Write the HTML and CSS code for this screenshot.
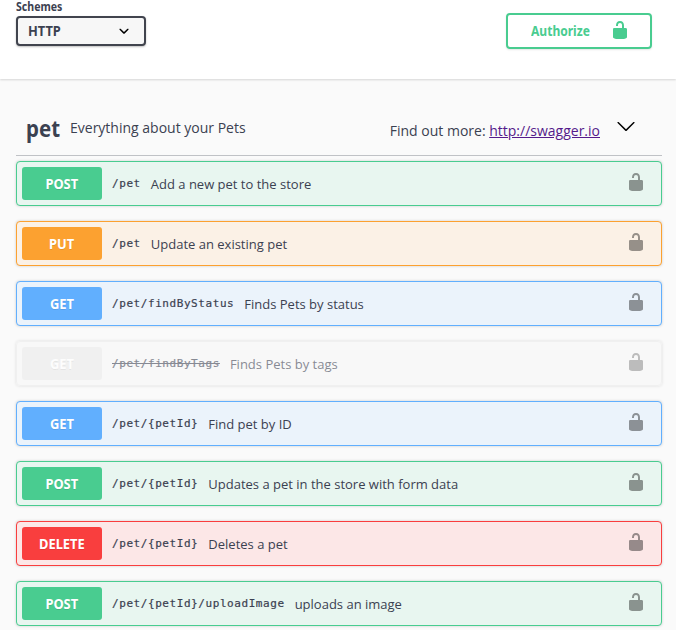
FILE: index.html
```html
<!DOCTYPE html>
<html lang="en">
<head>
<meta charset="utf-8">
<title>Swagger UI</title>
<link rel="stylesheet" href="styles.css">
</head>
<body>
<svg class="defs" width="0" height="0">
  <symbol id="unlocked" viewBox="0 0 20 20"><path d="M15.8 8H14V5.6C14 2.703 12.665 1 10 1 7.334 1 6 2.703 6 5.6V6h2v-.801C8 3.754 8.797 3 10 3c1.203 0 2 .754 2 2.199V8H4c-.553 0-1 .646-1 1.199V17c0 .549.428 1.139.951 1.307l1.197.387C5.672 18.861 6.55 19 7.1 19h5.8c.549 0 1.428-.139 1.951-.307l1.196-.387c.524-.167.953-.757.953-1.306V9.199C17 8.646 16.352 8 15.8 8z"/></symbol>
  <symbol id="arrow" viewBox="0 0 20 20"><path d="M13.418 7.859c.271-.268.709-.268.978 0 .27.268.272.701 0 .969l-3.908 3.83c-.27.268-.707.268-.979 0l-3.908-3.83c-.27-.267-.27-.701 0-.969.271-.268.709-.268.978 0L10 11l3.418-3.141z"/></symbol>
  <symbol id="large-arrow" viewBox="0 0 20 20"><path d="M17.418 6.109c.272-.268.709-.268.979 0s.271.701 0 .969l-7.908 7.83c-.27.268-.707.268-.979 0l-7.908-7.83c-.27-.268-.27-.701 0-.969.271-.268.709-.268.979 0L10 13.25l7.418-7.141z"/></symbol>
</svg>
<header class="scheme">
  <div class="schemes">
    <div class="schemes-title"><span class="fit">Schemes</span></div>
    <div class="select"><span class="fit">HTTP</span><svg class="icon"><use href="#arrow"/></svg></div>
  </div>
  <button class="authorize"><span class="fit">Authorize</span><svg class="icon"><use href="#unlocked"/></svg></button>
</header>
<main>
  <div class="tag">
    <h3><span class="fit">pet</span></h3>
    <p class="about">Everything about your Pets</p>
    <p class="docs">Find out more: <a href="#">http://swagger.io</a></p>
    <svg class="icon expand"><use href="#large-arrow"/></svg>
  </div>
  <div class="op post"><span class="method"><span class="fit">POST</span></span><code>/pet</code><span class="desc">Add a new pet to the store</span><svg class="icon"><use href="#unlocked"/></svg></div>
  <div class="op put"><span class="method"><span class="fit">PUT</span></span><code>/pet</code><span class="desc">Update an existing pet</span><svg class="icon"><use href="#unlocked"/></svg></div>
  <div class="op get"><span class="method"><span class="fit">GET</span></span><code>/pet/findByStatus</code><span class="desc">Finds Pets by status</span><svg class="icon"><use href="#unlocked"/></svg></div>
  <div class="op deprecated"><span class="method"><span class="fit">GET</span></span><code>/pet/findByTags</code><span class="desc">Finds Pets by tags</span><svg class="icon"><use href="#unlocked"/></svg></div>
  <div class="op get"><span class="method"><span class="fit">GET</span></span><code>/pet/{petId}</code><span class="desc">Find pet by ID</span><svg class="icon"><use href="#unlocked"/></svg></div>
  <div class="op post"><span class="method"><span class="fit">POST</span></span><code>/pet/{petId}</code><span class="desc">Updates a pet in the store with form data</span><svg class="icon"><use href="#unlocked"/></svg></div>
  <div class="op delete"><span class="method"><span class="fit">DELETE</span></span><code>/pet/{petId}</code><span class="desc">Deletes a pet</span><svg class="icon"><use href="#unlocked"/></svg></div>
  <div class="op post"><span class="method"><span class="fit">POST</span></span><code>/pet/{petId}/uploadImage</code><span class="desc">uploads an image</span><svg class="icon"><use href="#unlocked"/></svg></div>
</main>
</body>
</html>
```
FILE: styles.css
```css
* { box-sizing: border-box; }
html { height: 100%; overflow: hidden; }
body {
  margin: 0;
  height: 630px;
  overflow: hidden;
  background: #fafafa;
  color: #3b4151;
  font-family: "Open Sans", sans-serif;
}
.defs { display: none; }
.icon { width: 20px; height: 20px; flex: none; display: block; }
.fit { display: inline-block; transform: scaleX(.92); }
.scheme {
  display: flex;
  justify-content: space-between;
  height: 79px;
  padding: 0 24px 0 16px;
  background: #fff;
  box-shadow: 0 1px 2px rgba(0, 0, 0, .15);
}
.schemes-title {
  height: 16px;
  font: 700 11.5px/14px "Noto Sans", sans-serif;
}
.schemes-title .fit { transform-origin: left; transform: scaleX(.92); }
.select {
  display: flex;
  align-items: center;
  justify-content: space-between;
  width: 130px;
  height: 30px;
  padding: 0 10px;
  border: 2px solid #41444e;
  border-radius: 4px;
  background: #f7f7f7;
  box-shadow: 0 1px 2px rgba(0, 0, 0, .25);
  font: 700 13.5px/20px "Noto Sans", sans-serif;
}
.select .fit { transform-origin: left; transform: scaleX(.95); }
.authorize {
  display: flex;
  align-items: center;
  justify-content: space-between;
  width: 146px;
  height: 36px;
  margin-top: 13px;
  padding: 0 20px 0 23px;
  border: 2px solid #49cc90;
  border-radius: 4px;
  background: transparent;
  box-shadow: 0 1px 2px rgba(0, 0, 0, .1);
  color: #49cc90;
  fill: #49cc90;
  font: 700 14px/20px "Noto Sans", sans-serif;
}
.authorize .fit { transform-origin: left; transform: scaleX(.86); }
.authorize .icon { position: relative; top: -1px; }
main { padding: 21px 14px 0 16px; }
.tag {
  display: flex;
  align-items: center;
  height: 56px;
  margin-bottom: 5px;
  padding: 0 26px 0 10px;
  border-bottom: 1px solid rgba(59, 65, 81, .3);
}
.tag h3 { margin: 0; width: 44px; font: 700 23px/30px "Noto Sans", sans-serif; }
.tag h3 .fit { transform-origin: left; transform: scaleX(.89); }
.tag p { margin: 0; font-size: 14px; line-height: 20px; }
.about { flex: 1; }
.docs { padding-top: 6px; }
.docs a { color: #551a8b; }
.expand { margin: -3px 0 0 16px; }
.op {
  display: flex;
  align-items: center;
  height: 45px;
  margin-bottom: 15px;
  padding: 0 15px 0 5px;
  border: 1px solid;
  border-radius: 4px;
  box-shadow: 0 0 3px rgba(0, 0, 0, .19);
}
.method {
  width: 80px;
  height: 33px;
  margin-right: 10px;
  border-radius: 3px;
  color: #fff;
  font: 700 14px/33px "Noto Sans", sans-serif;
  text-align: center;
  text-shadow: 0 1px 0 rgba(0, 0, 0, .1);
}
.op code {
  font: 11px/20px "DejaVu Sans Mono", monospace;
  letter-spacing: .57px;
  color: #3b4151;
  -webkit-text-stroke: .2px #3b4151;
}
.desc { flex: 1; margin-left: 10px; padding-top: 1px; font-size: 13px; line-height: 20px; color: #3b4151; }
.op .icon { margin-top: -3px; opacity: .4; }
.post { border-color: #49cc90; background: #e8f6f0; }
.post .method { background: #49cc90; }
.put { border-color: #fca130; background: #fbf1e6; }
.put .method { background: #fca130; }
.get { border-color: #61affe; background: #ebf3fb; }
.get .method { background: #61affe; }
.delete { border-color: #f93e3e; background: #fce7e7; }
.delete .method { background: #f93e3e; }
.deprecated { border-color: #ebebeb; background: rgba(235, 235, 235, .1); opacity: .6; }
.deprecated .method { background: #ebebeb; }
.deprecated code { text-decoration: line-through; }
```
